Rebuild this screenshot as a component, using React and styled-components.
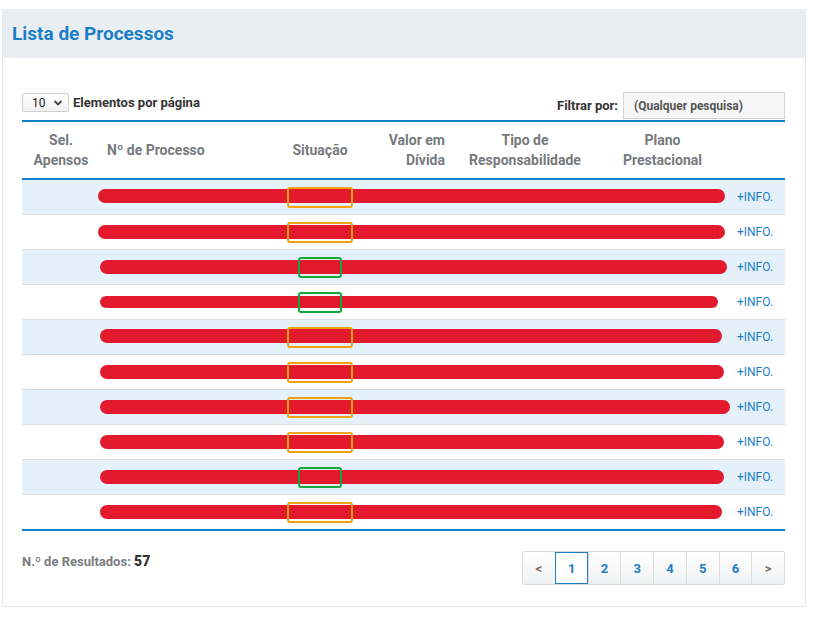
import React from "react"
import styled, { createGlobalStyle } from "styled-components"

const GlobalStyle = createGlobalStyle`
  body {
    margin: 0;
    background: #fff;
    font-family: Roboto, "Liberation Sans", Arial, sans-serif;
  }
`

const cols = "78px 180px 80px 90px 150px 125px 1fr"

const rows = [
  { status: "warn", from: 76, to: 703, dy: -1 },
  { status: "warn", from: 76, to: 703, dy: 0 },
  { status: "ok", from: 78, to: 705, dy: 0 },
  { status: "ok", from: 78, to: 696, dy: 0, thin: true },
  { status: "warn", from: 78, to: 700, dy: -1 },
  { status: "warn", from: 78, to: 702, dy: 0 },
  { status: "warn", from: 78, to: 708, dy: 0 },
  { status: "warn", from: 78, to: 702, dy: 0 },
  { status: "ok", from: 78, to: 702, dy: 0 },
  { status: "warn", from: 78, to: 700, dy: 0 },
]

export default function App() {
  return (
    <Page>
      <GlobalStyle />
      <Panel>
        <PanelHeader>
          <Title>Lista de Processos</Title>
        </PanelHeader>
        <PanelBody>
          <Controls>
            <Length>
              <Select>
                <span>10</span>
                <svg width="10" height="8" viewBox="0 0 10 8">
                  <path d="M1.5 2 L5 5.5 L8.5 2" stroke="#444" strokeWidth="1.8" fill="none" />
                </svg>
              </Select>
              <Label>Elementos por página</Label>
            </Length>
            <Filter>
              <Label>Filtrar por:</Label>
              <Search>(Qualquer pesquisa)</Search>
            </Filter>
          </Controls>
          <Table>
            <HeadRow>
              <Th $align="center">Sel.<br />Apensos</Th>
              <Th $align="left" $pad="0 0 0 7px">Nº de Processo</Th>
              <Th $align="center">Situação</Th>
              <Th $align="right" $pad="0 5px 0 0">Valor em<br />Dívida</Th>
              <Th $align="center">Tipo de<br />Responsabilidade</Th>
              <Th $align="center">Plano<br />Prestacional</Th>
              <Th />
            </HeadRow>
            {rows.map((r, i) => (
              <Row key={i} $odd={i % 2 === 0}>
                <Cell />
                <Cell />
                <Cell $center>
                  <Badge $status={r.status} />
                </Cell>
                <Cell />
                <Cell />
                <Cell />
                <Cell $center>
                  <Info>+INFO.</Info>
                </Cell>
                <Redact
                  $thin={r.thin}
                  style={{ left: r.from, width: r.to - r.from, marginTop: r.dy }}
                />
              </Row>
            ))}
          </Table>
          <Footer>
            <Count>
              N.º de Resultados: <strong>57</strong>
            </Count>
            <Pager>
              <PageBtn $arrow>&lt;</PageBtn>
              <PageBtn $active>1</PageBtn>
              <PageBtn>2</PageBtn>
              <PageBtn>3</PageBtn>
              <PageBtn>4</PageBtn>
              <PageBtn>5</PageBtn>
              <PageBtn>6</PageBtn>
              <PageBtn $arrow>&gt;</PageBtn>
            </Pager>
          </Footer>
        </PanelBody>
      </Panel>
    </Page>
  )
}

const Page = styled.div`
  padding: 9px 19px 0 2px;
`

const Panel = styled.div`
  border: 1px solid #e6e9ec;
  border-top: none;
  background: #fff;
`

const PanelHeader = styled.div`
  background: #e9eef2;
  height: 49px;
  display: flex;
  align-items: center;
  padding-left: 9px;
`

const Title = styled.h2`
  margin: 0;
  font-size: 19px;
  font-weight: 700;
  color: #1b7ec6;
`

const PanelBody = styled.div`
  padding: 34px 20px 21px 19px;
`

const Controls = styled.div`
  display: flex;
  justify-content: space-between;
  align-items: flex-start;
  height: 28px;
`

const Length = styled.div`
  display: flex;
  align-items: center;
  gap: 4px;
  margin-top: 1px;
`

const Select = styled.div`
  width: 47px;
  height: 19px;
  box-sizing: border-box;
  border: 1px solid #cfcfcf;
  border-radius: 2px;
  background: linear-gradient(#fff, #f1f1f1);
  display: flex;
  align-items: center;
  justify-content: space-between;
  padding: 0 5px 0 9px;
  font-size: 12px;
  color: #222;
`

const Label = styled.span`
  font-size: 13px;
  font-weight: 700;
  color: #333;
`

const Filter = styled.div`
  display: flex;
  align-items: center;
  gap: 5px;
`

const Search = styled.div`
  width: 162px;
  height: 27px;
  box-sizing: border-box;
  border: 1px solid #d3d3d3;
  background: #f6f6f6;
  display: flex;
  align-items: center;
  padding-left: 10px;
  font-size: 12px;
  font-weight: 700;
  color: #555;
`

const Table = styled.div`
  border-top: 2px solid #0a84c9;
  border-bottom: 2px solid #0a84c9;
`

const HeadRow = styled.div`
  display: grid;
  grid-template-columns: ${cols};
  height: 56px;
  align-items: center;
  border-bottom: 2px solid #0a84c9;
`

const Th = styled.div`
  text-align: ${p => p.$align || "left"};
  padding: ${p => p.$pad || "0"};
  font-size: 14px;
  line-height: 20px;
  font-weight: 700;
  color: #777a7d;
  white-space: nowrap;
`

const Row = styled.div`
  position: relative;
  display: grid;
  grid-template-columns: ${cols};
  height: 34px;
  align-items: center;
  background: ${p => (p.$odd ? "#e5f1fa" : "#fff")};
  & + & {
    border-top: 1px solid #dcdfe2;
  }
`

const Cell = styled.div`
  display: flex;
  justify-content: ${p => (p.$center ? "center" : "flex-start")};
  align-items: center;
`

const Badge = styled.div`
  position: relative;
  z-index: 1;
  width: ${p => (p.$status === "ok" ? "44px" : "66px")};
  height: 21px;
  box-sizing: border-box;
  border: 2px solid ${p => (p.$status === "ok" ? "#14a83a" : "#f0a20c")};
  border-radius: 3px;
`

const Info = styled.span`
  font-size: 12px;
  color: #1b7ec6;
`

const Redact = styled.div`
  position: absolute;
  top: 50%;
  height: ${p => (p.$thin ? "12px" : "14px")};
  transform: translateY(-50%);
  background: #e31a2e;
  border-radius: 8px;
  pointer-events: none;
`

const Footer = styled.div`
  display: flex;
  justify-content: space-between;
  align-items: flex-start;
  padding-top: 20px;
`

const Count = styled.div`
  padding-top: 2px;
  font-size: 13px;
  font-weight: 700;
  color: #7a7d80;
  strong {
    font-size: 14px;
    color: #333;
  }
`

const Pager = styled.div`
  display: flex;
  width: 263px;
  box-sizing: border-box;
  border: 1px solid #dcdcdc;
  border-radius: 2px;
`

const PageBtn = styled.div`
  flex: 1;
  height: 32px;
  box-sizing: border-box;
  display: flex;
  align-items: center;
  justify-content: center;
  background: linear-gradient(#fff, #f0f1f2);
  border-left: 1px solid #dcdcdc;
  font-size: 13px;
  font-weight: 700;
  color: ${p => (p.$arrow ? "#7b6f66" : "#1b7ec6")};
  &:first-child {
    border-left: none;
  }
  ${p =>
    p.$active &&
    `
    background: #fff;
    outline: 1.5px solid #1b7ec6;
    outline-offset: -1px;
    position: relative;
    z-index: 1;
  `}
`
